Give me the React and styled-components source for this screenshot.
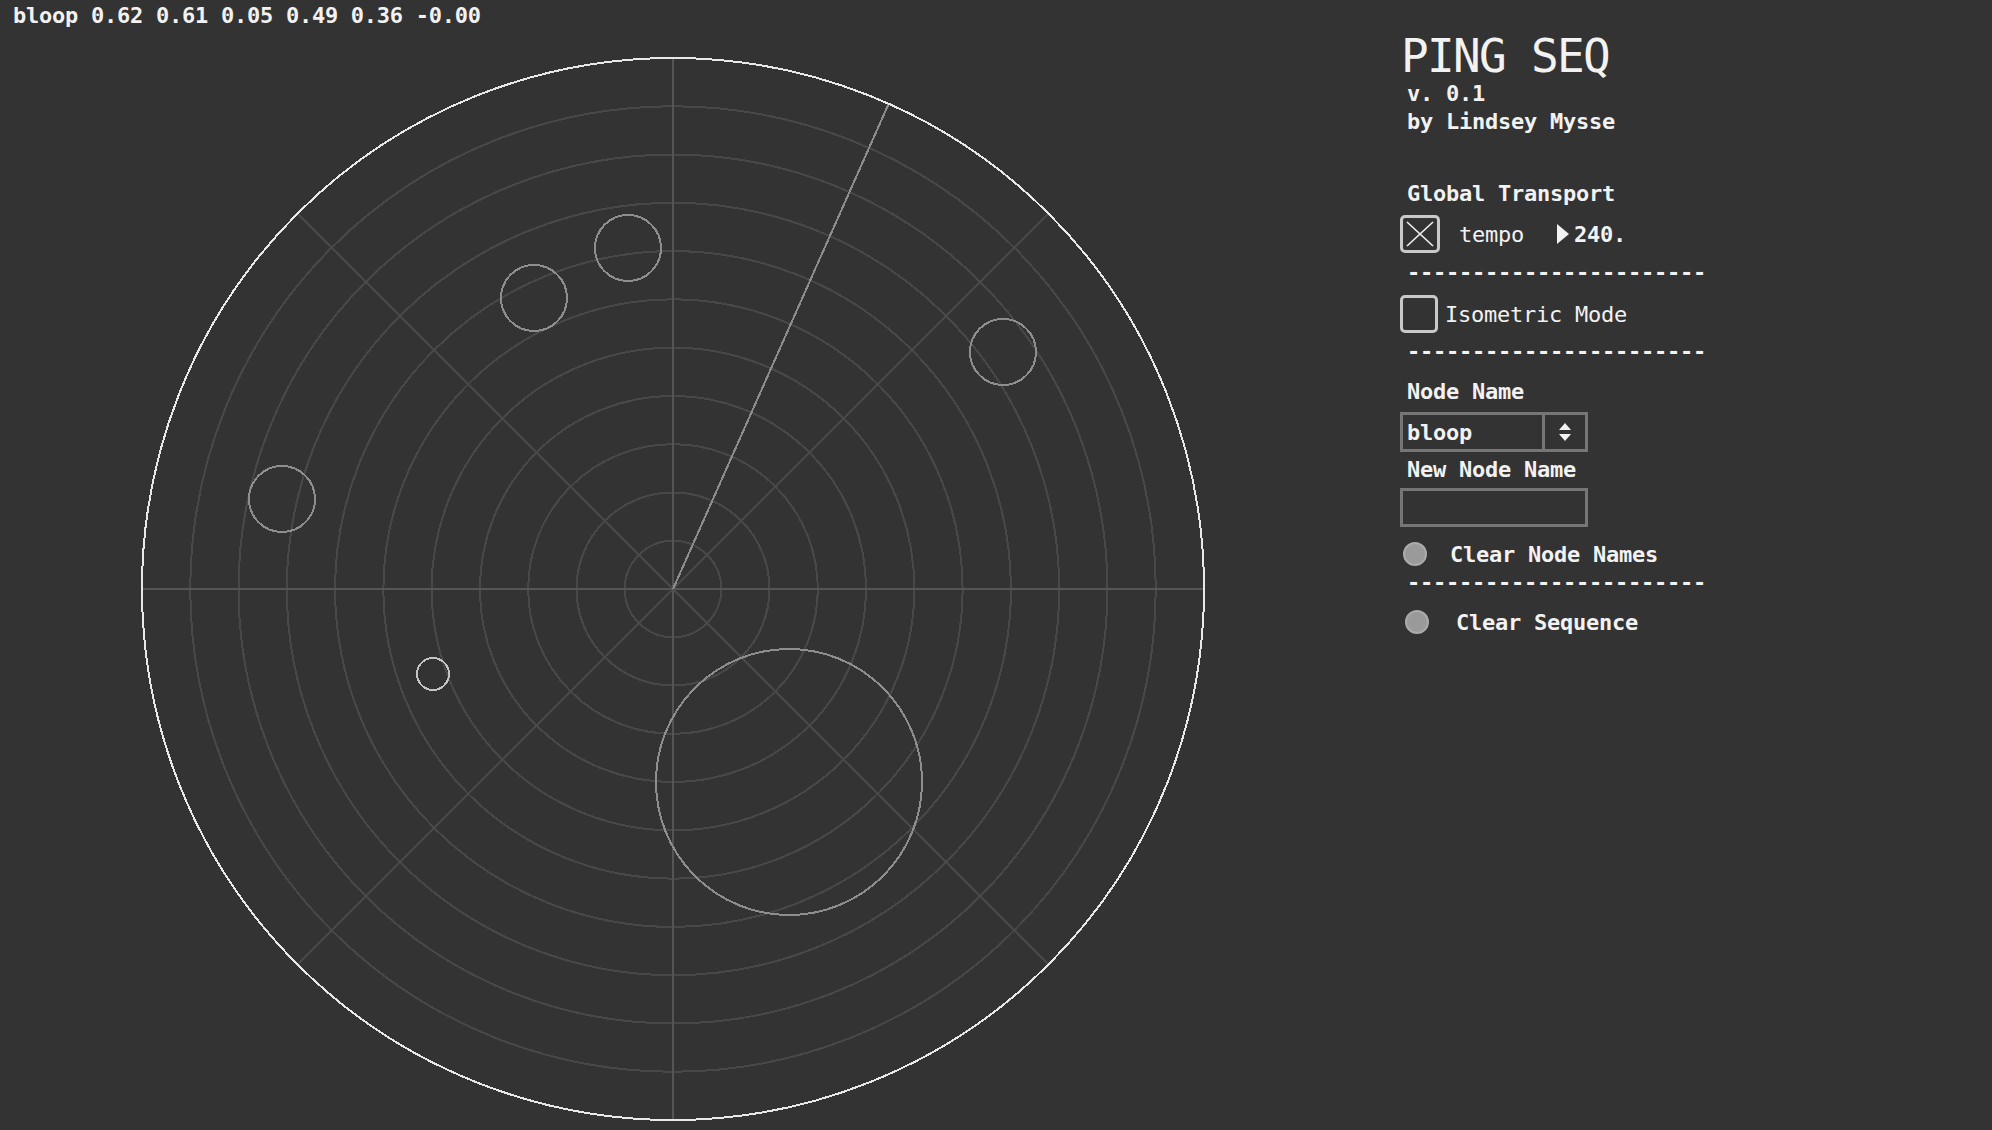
import styled, { createGlobalStyle } from 'styled-components';

const GlobalStyle = createGlobalStyle`
    html, body {
        margin: 0;
        padding: 0;
        background: #333333;
        overflow: hidden;
    }
    body {
        font-family: "DejaVu Sans Mono", "Liberation Mono", monospace;
        color: #f2f2f2;
    }
`;

const Page = styled.div`
    display: flex;
    width: 1992px;
    height: 1130px;
    background: #333333;
`;

const Stage = styled.div`
    display: flex;
    flex-direction: column;
    width: 1400px;
`;

const Readout = styled.div`
    height: 32px;
    box-sizing: border-box;
    padding: 2px 0 0 13px;
    font-size: 22px;
    line-height: 28px;
    letter-spacing: -0.25px;
    font-weight: bold;
    white-space: pre;
`;

const Panel = styled.div`
    display: flex;
    flex-direction: column;
    padding-top: 33px;
    width: 360px;
`;

const Title = styled.div`
    font-size: 46px;
    line-height: 46px;
    letter-spacing: -1.7px;
    padding-left: 1px;
    margin-bottom: 1px;
`;

const Label = styled.div`
    font-size: 22px;
    line-height: 28px;
    letter-spacing: -0.25px;
    font-weight: bold;
    padding-left: 7px;
    margin-top: ${p => p.$mt || 0}px;
    white-space: pre;
`;

const Row = styled.div`
    display: flex;
    align-items: center;
    height: ${p => p.$h || 38}px;
    margin-top: ${p => p.$mt || 0}px;
    gap: ${p => p.$gap || 0}px;
`;

const Check = styled.div`
    width: ${p => p.$w || 40}px;
    height: 38px;
    box-sizing: border-box;
    border: 3px solid #c9c9c9;
    border-radius: 5px;
    display: flex;
    align-items: center;
    justify-content: center;
`;

const RowText = styled.span`
    font-size: 22px;
    letter-spacing: -0.25px;
    font-weight: ${p => (p.$bold ? 'bold' : 'normal')};
    margin-left: ${p => p.$ml || 0}px;
`;

const NumberBox = styled.div`
    display: flex;
    align-items: center;
    gap: 5px;
    margin-left: 33px;
`;

const Arrow = styled.span`
    width: 0;
    height: 0;
    border-top: 10px solid transparent;
    border-bottom: 10px solid transparent;
    border-left: 12px solid #f2f2f2;
`;

const Field = styled.div`
    width: 188px;
    height: ${p => p.$h || 40}px;
    box-sizing: border-box;
    border: 3px solid #767676;
    margin-top: ${p => p.$mt || 0}px;
    display: flex;
    align-items: stretch;
`;

const FieldText = styled.div`
    flex: 1;
    display: flex;
    align-items: center;
    padding-left: 4px;
    font-size: 22px;
    letter-spacing: -0.25px;
    font-weight: bold;
`;

const Spinner = styled.div`
    width: 40px;
    border-left: 3px solid #767676;
    display: flex;
    align-items: center;
    justify-content: center;
`;

const Radio = styled.span`
    width: 24px;
    height: 24px;
    box-sizing: border-box;
    border-radius: 50%;
    background: #9a9a9a;
    border: 2px solid #ababab;
    margin-left: ${p => p.$ml || 3}px;
`;

const rings = Array.from({ length: 10 }, (_, i) => i + 1);
const R = 531;
const CX = 673;
const CY = 557;

const nodes = [
    { x: 628, y: 216, r: 33, c: '#8e8e8e' },
    { x: 534, y: 266, r: 33, c: '#8e8e8e' },
    { x: 1003, y: 320, r: 33, c: '#8e8e8e' },
    { x: 282, y: 467, r: 33, c: '#8e8e8e' },
    { x: 433, y: 642, r: 16, c: '#c4c4c4' },
    { x: 789, y: 750, r: 133, c: '#8e8e8e' },
];

const sweepAngle = 23.96;

const Radar = () => {
    const d = R * Math.SQRT1_2;
    const a = (sweepAngle * Math.PI) / 180;
    return (
        <svg width="1400" height="1098" viewBox="0 0 1400 1098" shapeRendering="crispEdges">
            {rings.map(k => (
                <circle key={k} cx={CX} cy={CY} r={(R * k) / 11} fill="none" stroke="#484848" strokeWidth="2" />
            ))}
            <line x1={CX - d} y1={CY - d} x2={CX + d} y2={CY + d} stroke="#484848" strokeWidth="1.5" />
            <line x1={CX - d} y1={CY + d} x2={CX + d} y2={CY - d} stroke="#484848" strokeWidth="1.5" />
            <line x1={CX - R} y1={CY} x2={CX + R} y2={CY} stroke="#555" strokeWidth="2" />
            <line x1={CX} y1={CY - R} x2={CX} y2={CY + R} stroke="#555" strokeWidth="2" />
            <line
                x1={CX}
                y1={CY}
                x2={CX + R * Math.sin(a)}
                y2={CY - R * Math.cos(a)}
                stroke="#8c8c8c"
                strokeWidth="2"
            />
            {nodes.map((n, i) => (
                <circle key={i} cx={n.x} cy={n.y} r={n.r} fill="none" stroke={n.c} strokeWidth="2" />
            ))}
            <circle cx={CX} cy={CY} r={R} fill="none" stroke="#e8e8e8" strokeWidth="2" />
        </svg>
    );
};

const dashes = '-----------------------';

export default function App() {
    return (
        <>
            <GlobalStyle />
            <Page>
                <Stage>
                    <Readout>bloop 0.62 0.61 0.05 0.49 0.36 -0.00</Readout>
                    <Radar />
                </Stage>
                <Panel>
                    <Title>PING SEQ</Title>
                    <Label>v. 0.1</Label>
                    <Label>by Lindsey Mysse</Label>
                    <Label $mt={44}>Global Transport</Label>
                    <Row $mt={7}>
                        <Check>
                            <svg width="30" height="28" viewBox="0 0 30 28">
                                <line x1="2" y1="2" x2="28" y2="26" stroke="#f2f2f2" strokeWidth="1.6" />
                                <line x1="28" y1="2" x2="2" y2="26" stroke="#f2f2f2" strokeWidth="1.6" />
                            </svg>
                        </Check>
                        <RowText $ml={19}>tempo</RowText>
                        <NumberBox>
                            <Arrow />
                            <RowText $bold>240.</RowText>
                        </NumberBox>
                    </Row>
                    <Label $mt={6}>{dashes}</Label>
                    <Row $mt={8} $gap={7}>
                        <Check $w={38} />
                        <RowText>Isometric Mode</RowText>
                    </Row>
                    <Label $mt={5}>{dashes}</Label>
                    <Label $mt={12}>Node Name</Label>
                    <Field $mt={6}>
                        <FieldText>bloop</FieldText>
                        <Spinner>
                            <svg width="14" height="22" viewBox="0 0 14 22">
                                <polygon points="7,2 13,9 1,9" fill="#f2f2f2" />
                                <polygon points="1,13 13,13 7,20" fill="#f2f2f2" />
                            </svg>
                        </Spinner>
                    </Field>
                    <Label $mt={4}>New Node Name</Label>
                    <Field $mt={4} $h={39} />
                    <Row $mt={14} $h={26} $gap={23}>
                        <Radio />
                        <RowText $bold>Clear Node Names</RowText>
                    </Row>
                    <Label $mt={2}>{dashes}</Label>
                    <Row $mt={11} $h={28} $gap={27}>
                        <Radio $ml={5} />
                        <RowText $bold>Clear Sequence</RowText>
                    </Row>
                </Panel>
            </Page>
        </>
    );
}
